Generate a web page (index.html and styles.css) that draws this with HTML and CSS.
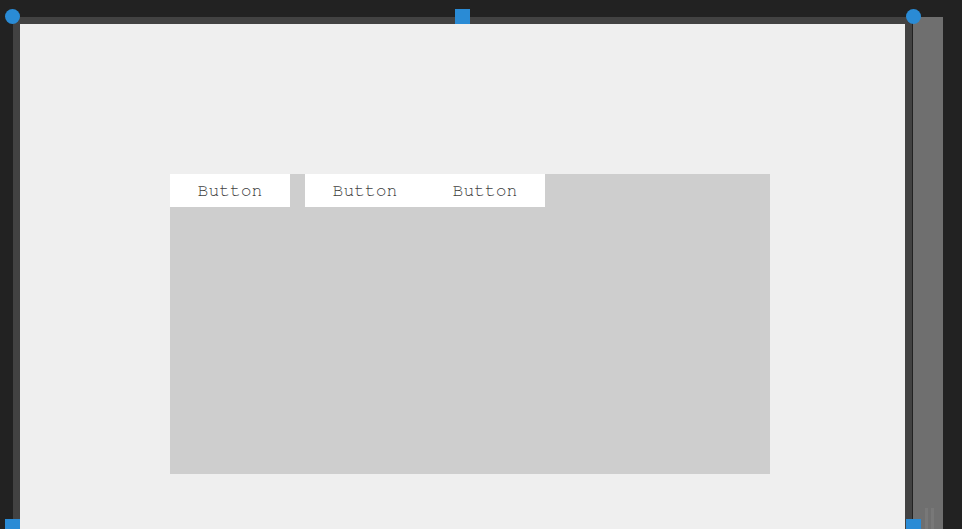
FILE: index.html
```html
<!DOCTYPE html>
<html lang="en">
  <head>
    <meta charset="UTF-8" />
    <meta name="viewport" content="width=device-width, initial-scale=1.0" />
    <title>Scene Editor</title>
    <link rel="stylesheet" href="styles.css">
  </head>

  <body>
    <div class="workspace">
      <div class="frame">
        <div class="canvas">
          <div class="panel">
            <div class="toolbar">
              <div class="btn-group">
                <button class="btn">Button</button>
              </div>
              <div class="btn-group">
                <button class="btn">Button</button>
                <button class="btn">Button</button>
              </div>
            </div>
          </div>
        </div>

        <!-- selection handles -->
        <span class="handle round top-left"></span>
        <span class="handle square top-mid"></span>
        <span class="handle round top-right"></span>
        <span class="handle square bottom-left"></span>
        <span class="handle square bottom-right"></span>
      </div>

      <div class="scrollbar">
        <div class="grip">
          <span></span>
          <span></span>
        </div>
      </div>
    </div>
  </body>
</html>
```

FILE: styles.css
```css
html,
body {
  margin: 0;
  height: 100%;
  overflow: hidden;
}

body {
  background-color: #222222;
  font-family: "Nimbus Mono PS", "FreeMono", "Liberation Mono", monospace;
}

.workspace {
  display: flex;
  align-items: flex-start;
  gap: 1px;
  padding: 17px 0 0 13px;
}

.frame {
  position: relative;
  width: 899px;
  height: 530px;
  box-sizing: border-box;
  border: 7px solid #424242;
  border-bottom: none;
  background-color: #efefef;
}

.canvas {
  padding: 150px 0 0 150px;
}

.panel {
  width: 600px;
  height: 300px;
  background-color: #cecece;
}

.toolbar {
  display: flex;
  gap: 15px;
}

.btn-group {
  display: flex;
}

.btn {
  width: 120px;
  height: 33px;
  padding: 0;
  border: none;
  background-color: #ffffff;
  color: #404040;
  font-family: "Nimbus Mono PS", "FreeMono", "Liberation Mono", monospace;
  font-size: 18px;
  cursor: pointer;
}

.handle {
  position: absolute;
  width: 15px;
  height: 15px;
  background-color: #2a8bd5;
}

.handle.round {
  border-radius: 50%;
}

.top-left {
  left: -15px;
  top: -15px;
}

.top-mid {
  left: 435px;
  top: -15px;
}

.top-right {
  right: -16px;
  top: -15px;
}

.bottom-left {
  left: -15px;
  top: 495px;
}

.bottom-right {
  right: -16px;
  top: 495px;
}

.scrollbar {
  width: 30px;
  height: 512px;
  background-color: #6f6f6f;
  display: flex;
  flex-direction: column;
  justify-content: flex-end;
}

.grip {
  display: flex;
  justify-content: center;
  gap: 3px;
  padding-left: 2px;
  height: 21px;
}

.grip span {
  width: 3px;
  background-color: #787878;
}
```
